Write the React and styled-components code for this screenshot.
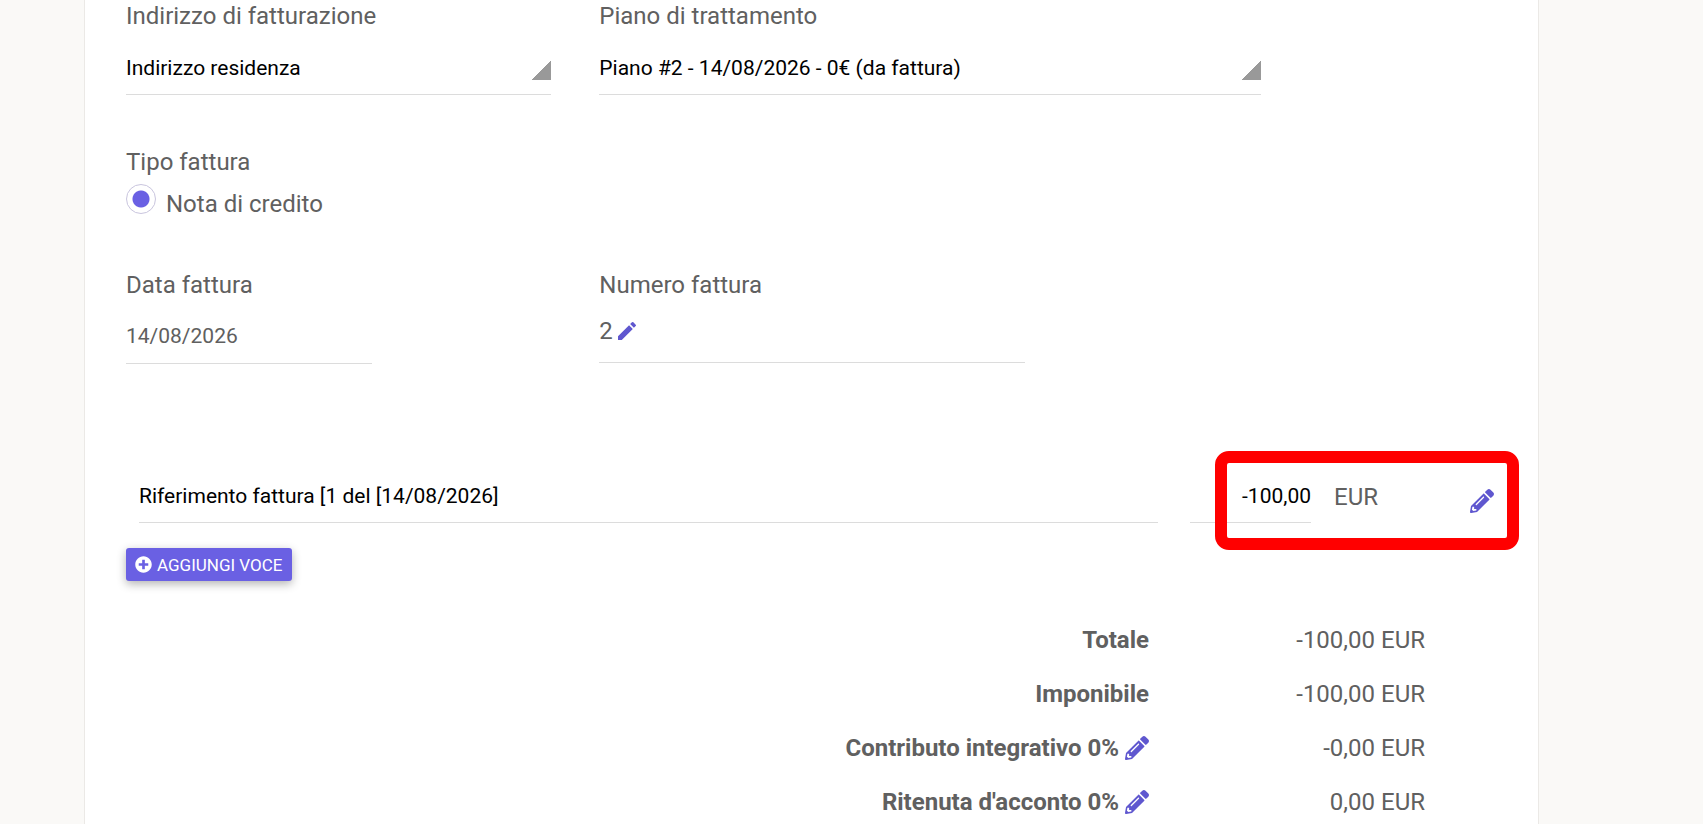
import styled, { createGlobalStyle } from "styled-components";
import { FaPencilAlt, FaPlusCircle } from "react-icons/fa";
import { MdModeEdit } from "react-icons/md";

const GlobalStyle = createGlobalStyle`
  *, *::before, *::after {
    box-sizing: border-box;
  }

  body {
    margin: 0;
    background: #faf9f7;
    color: #606060;
    font-family: Roboto, "Liberation Sans", sans-serif;
    font-size: 24px;
    line-height: 32px;
  }

  #root {
    display: flex;
    overflow: hidden;
    min-height: 100vh;
  }
`;

/*
  Page layout
*/
const Page = styled.main`
  flex: 1;
  display: flex;
  padding: 0 164px 0 84px;
`;

const Card = styled.form`
  flex: 1;
  min-width: 0;
  padding: 0 16px 0 17px;
  background: #fff;
  border: solid #ebe9e6;
  border-width: 0 1px;
`;

const Row = styled.div`
  display: grid;
  grid-template-columns: repeat(12, 1fr);
  margin-bottom: ${(props) => props.$gap}px;
`;

const Column = styled.div`
  grid-column: span ${(props) => props.$span};
  padding: 0 24px;
`;

/*
  Form fields
*/
const Label = styled.label`
  display: block;
`;

const Select = styled.select`
  display: block;
  width: 100%;
  height: 63px;
  padding: 18px 24px 8px 0;
  appearance: none;
  border: 0;
  border-bottom: 1px solid #dcdcdc;
  border-radius: 0;
  background: linear-gradient(135deg, transparent 50%, #999 51%) no-repeat;
  background-position: right 0 top 28px;
  background-size: 20px 20px;
  color: #000;
  font: inherit;
  font-size: 21px;
`;

const Input = styled.input`
  display: block;
  width: ${(props) => props.$width || "100%"};
  min-width: 0;
  height: ${(props) => props.$height}px;
  padding: ${(props) => props.$padding || "0 0 2px"};
  border: 0;
  border-bottom: 1px solid #dcdcdc;
  border-radius: 0;
  background: transparent;
  color: ${(props) => props.$color || "#000"};
  font: inherit;
  font-size: 21px;
  text-align: ${(props) => props.$align || "left"};
`;

const NumberField = styled.div`
  display: flex;
  align-items: center;
  gap: 2px;
  height: 62px;
  padding-bottom: 2px;
  border-bottom: 1px solid #dcdcdc;
`;

const RadioLabel = styled.label`
  display: flex;
  gap: 10px;
  padding-top: 6px;
`;

const Radio = styled.input`
  width: 30px;
  height: 30px;
  margin: 0;
  appearance: none;
  border: 1px solid #c9c5de;
  border-radius: 50%;
  background: radial-gradient(circle, #6a60e3 8px, transparent 9px);
`;

const RadioText = styled.span`
  padding-top: 4px;
`;

const IconButton = styled.button`
  display: inline-flex;
  padding: 0;
  border: 0;
  background: none;
  color: #5f57cf;
  font-size: 24px;
  cursor: pointer;
`;

/*
  Invoice lines
*/
const Line = styled.div`
  display: flex;
  align-items: center;
  position: relative;
  margin: 0 28px 25px 37px;
`;

const Description = styled.div`
  flex: 1;
  margin-right: 32px;
`;

const Amount = styled.div`
  width: 121px;
  margin-right: 23px;
`;

const Currency = styled.span`
  width: 136px;
`;

const LineAction = styled.div`
  display: flex;
  padding-top: 8px;
`;

const Highlight = styled.div`
  position: absolute;
  top: -20px;
  right: -25px;
  width: 304px;
  height: 99px;
  border: 12px solid #f00;
  border-radius: 14px;
  pointer-events: none;
`;

const AddButton = styled.button`
  display: flex;
  align-items: center;
  gap: 5px;
  height: 33px;
  margin: 0 24px 32px;
  padding: 0 9px;
  border: 0;
  border-radius: 3px;
  background: #6a60e3;
  box-shadow: 0 3px 10px rgba(0, 0, 0, 0.3);
  color: #fff;
  font: inherit;
  font-size: 17px;
  text-transform: uppercase;
  cursor: pointer;
`;

/*
  Totals
*/
const Totals = styled.table`
  width: 100%;
  border-collapse: collapse;
  white-space: nowrap;

  th,
  td {
    height: 54px;
    padding: 0;
    text-align: right;
  }

  td {
    width: 373px;
    padding-right: 97px;
  }
`;

const TotalName = styled.span`
  display: inline-flex;
  align-items: center;
  gap: 6px;
`;

const totals = [
  { name: "Totale", value: "-100,00 EUR" },
  { name: "Imponibile", value: "-100,00 EUR" },
  { name: "Contributo integrativo 0%", value: "-0,00 EUR", editable: true },
  { name: "Ritenuta d'acconto 0%", value: "0,00 EUR", editable: true },
];

export default function App() {
  return (
    <>
      <GlobalStyle />
      <Page>
        <Card onSubmit={(e) => e.preventDefault()}>
          {/* Address and treatment plan */}
          <Row $gap={51}>
            <Column $span={4}>
              <Label htmlFor="address">Indirizzo di fatturazione</Label>
              <Select id="address">
                <option>Indirizzo residenza</option>
              </Select>
            </Column>
            <Column $span={6}>
              <Label htmlFor="plan">Piano di trattamento</Label>
              <Select id="plan">
                <option>Piano #2 - 14/08/2026 - 0€ (da fattura)</option>
              </Select>
            </Column>
          </Row>

          {/* Invoice type */}
          <Row $gap={49}>
            <Column $span={4} role="radiogroup" aria-labelledby="type">
              <Label as="div" id="type">
                Tipo fattura
              </Label>
              <RadioLabel>
                <Radio type="radio" name="type" defaultChecked />
                <RadioText>Nota di credito</RadioText>
              </RadioLabel>
            </Column>
          </Row>

          {/* Date and number */}
          <Row $gap={107}>
            <Column $span={4}>
              <Label htmlFor="date">Data fattura</Label>
              <Input
                id="date"
                defaultValue="14/08/2026"
                $width="246px"
                $height={63}
                $padding="8px 0 0"
                $color="#606060"
              />
            </Column>
            <Column $span={4}>
              <Label as="div">Numero fattura</Label>
              <NumberField>
                2
                <IconButton type="button" aria-label="Modifica numero">
                  <MdModeEdit />
                </IconButton>
              </NumberField>
            </Column>
          </Row>

          {/* Invoice lines */}
          <Line>
            <Description>
              <Input
                aria-label="Descrizione"
                defaultValue="Riferimento fattura [1 del [14/08/2026]"
                $height={52}
              />
            </Description>
            <Amount>
              <Input
                aria-label="Importo"
                defaultValue="-100,00"
                $height={52}
                $align="right"
              />
            </Amount>
            <Currency>EUR</Currency>
            <LineAction>
              <IconButton type="button" aria-label="Modifica voce">
                <FaPencilAlt />
              </IconButton>
            </LineAction>
            <Highlight />
          </Line>
          <AddButton type="button">
            <FaPlusCircle />
            Aggiungi voce
          </AddButton>

          <Totals>
            <tbody>
              {totals.map((total) => (
                <tr key={total.name}>
                  <th scope="row">
                    <TotalName>
                      {total.name}
                      {total.editable && (
                        <IconButton
                          type="button"
                          aria-label={`Modifica ${total.name}`}
                        >
                          <FaPencilAlt />
                        </IconButton>
                      )}
                    </TotalName>
                  </th>
                  <td>{total.value}</td>
                </tr>
              ))}
            </tbody>
          </Totals>
        </Card>
      </Page>
    </>
  );
}
